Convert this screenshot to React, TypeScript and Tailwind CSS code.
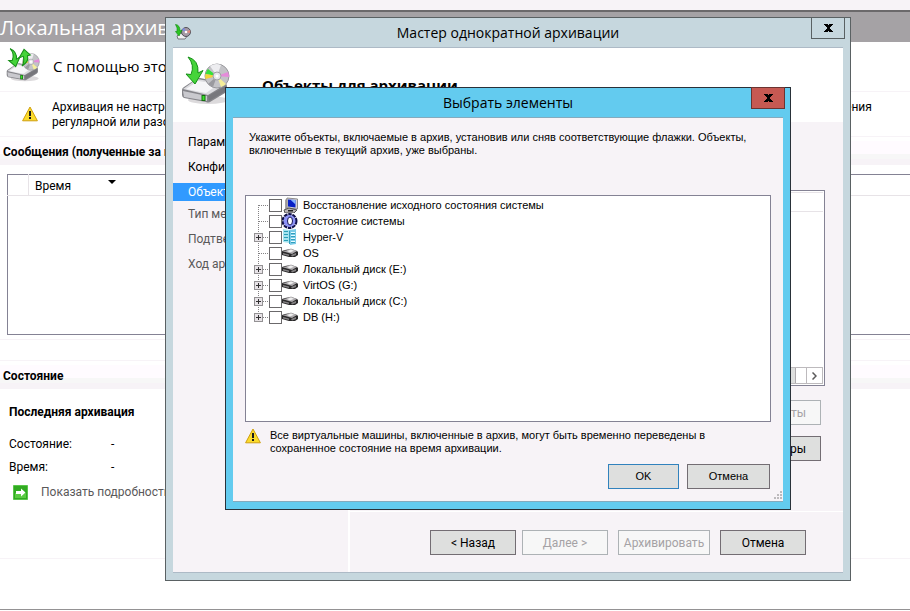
import React from "react";

type ButtonKind = "normal" | "default" | "disabled";

const buttonStyles: Record<ButtonKind, string> = {
  normal: "border-[#736d73] bg-[#dedfde] text-black",
  default: "border-[#3182bd] bg-[#dedfde] text-black",
  disabled: "border-[#adb2b5] bg-[#f7f7f7] text-[#a5a2a5]",
};

function Button({ kind = "normal", className = "", children }: { kind?: ButtonKind; className?: string; children: React.ReactNode }) {
  return (
    <button disabled={kind === "disabled"} className={`h-[25px] whitespace-nowrap border ${buttonStyles[kind]} ${className}`}>
      {children}
    </button>
  );
}

function Drive() {
  return (
    <g>
      <ellipse cx="27" cy="44" rx="20" ry="4" fill="#dcdadc" />
      <path d="M1 34Q1 32 3 31L15 23Q17 22 19 22L44 27Q46 28 46 30V34Q46 36 44 37L29 46Q27 47 25 46L3 42Q1 41 1 39Z" fill="#85858a" />
      <path d="M2 33 16 23 45 28 27 39Z" fill="#dcdce0" />
      <path d="M5 33 17 25 38 28 25 37Z" fill="#f6f6f8" />
      <path d="M2 35 26 40V45L3 41Z" fill="#c9c9ce" />
      <path d="M27 40 45 30V35L28 45Z" fill="#77777c" />
      <path d="M20.500 39h4v6h-4z" fill="#14700f" />
      <path d="M21.500 40h2v4h-2z" fill="#3be42c" />
    </g>
  );
}

function Disc() {
  return (
    <g>
      <circle cx="36" cy="20" r="12" fill="#c3c3c7" stroke="#98989c" />
      <path d="M36 20 29 10 A12 12 0 0 1 40 9Z" fill="#ededf0" />
      <path d="M36 20 24.500 18 A12 12 0 0 1 27 13Z" fill="#35e03c" />
      <path d="M36 20 24.500 23 A12 12 0 0 1 24.500 18Z" fill="#f0d43a" />
      <path d="M36 20 47 16 A12 12 0 0 1 48 21Z" fill="#e58bda" />
      <path d="M36 20 45 28 A12 12 0 0 1 40 31Z" fill="#f5ef9a" />
      <path d="M36 20 32 31 A12 12 0 0 1 27 28Z" fill="#9a9a9f" />
      <circle cx="36" cy="20" r="4" fill="#e6e6e8" stroke="#a0a0a4" />
      <circle cx="36" cy="20" r="1.500" fill="#fff" />
    </g>
  );
}

function WizardIcon({ className }: { className: string }) {
  return (
    <svg viewBox="0 0 49 49" className={className} aria-hidden="true">
      <Drive />
      <Disc />
      <path d="M7 1Q18 4 17 17L22 14.500 14 28 5 18 10 18.500Q14 9 7 1Z" fill="#45d43a" stroke="#178f18" />
    </svg>
  );
}

function WizardSmallIcon({ className }: { className: string }) {
  return (
    <svg viewBox="0 0 16 16" className={className} aria-hidden="true">
      <path d="M2 12 5 9 13 11 10 15 3 15Z" fill="#f0f0f2" stroke="#77777c" />
      <circle cx="11" cy="8" r="4.500" fill="#a59aa5" stroke="#52525a" />
      <path d="M11 8 7 6 A4.500 4.500 0 0 1 9 4Z" fill="#7b8ae7" />
      <path d="M11 8 15 6 A4.500 4.500 0 0 1 15 9Z" fill="#e7867b" />
      <circle cx="11" cy="8" r="1.300" fill="#fff" />
      <path d="M.5.500Q5 1 5 7L7 6 4 12 .5 7.500 2 7.500Q3 4 .5.500Z" fill="#2bc522" stroke="#178f18" strokeWidth=".7" />
    </svg>
  );
}

function BackupIcon({ className }: { className: string }) {
  return (
    <svg viewBox="0 0 49 49" className={className} aria-hidden="true">
      <Drive />
      <Disc />
      <path d="M6 1Q16 5 15 16L20 13 14 27 4 18 9 18Q13 9 6 1Z" fill="#45d43a" stroke="#178f18" strokeWidth="1.500" />
      <path d="M23 26Q27 20 25 12L19 14 26 2 35 10 31 11Q33 20 23 26Z" fill="#45d43a" stroke="#178f18" strokeWidth="1.500" />
    </svg>
  );
}

function WarningIcon() {
  return (
    <svg viewBox="0 0 16 16" className="h-4 w-4 shrink-0" aria-hidden="true">
      <path d="M8 1 15.400 14.800H.6Z" fill="#fbdb2b" stroke="#cf9f10" strokeLinejoin="round" />
      <path d="M7 5h2v5H7zM7 11h2v2H7z" fill="#1b1b1b" />
    </svg>
  );
}

function ComputerIcon() {
  return (
    <svg viewBox="0 0 16 16" className="h-4 w-4" aria-hidden="true">
      <path d="M3 3 5 1V12H3Z" fill="#a5a2a5" />
      <path d="M5 1 15.500 2V12L5 11Z" fill="#d6d3d6" stroke="#8c8a8c" />
      <path d="M6 2.500 13.500 3V10.500L6 9.500Z" fill="#0820c6" />
      <path d="M8.500 2.700 13.500 3V7.500Z" fill="#84b2ff" />
      <path d="M2 13 7 11 15 13 12 16H3Z" fill="#b5b2b5" stroke="#525152" />
      <path d="M6 13h5v1.500H6z" fill="#212021" />
    </svg>
  );
}

function GearIcon() {
  return (
    <svg viewBox="0 0 16 16" className="h-4 w-4" aria-hidden="true">
      <circle cx="7.500" cy="8" r="6.500" fill="none" stroke="#10104a" strokeWidth="3" strokeDasharray="3.400 .684" />
      <circle cx="7.500" cy="8" r="6" fill="#8c92f7" />
      <ellipse cx="8" cy="8" rx="2.500" ry="4" fill="#fff" stroke="#18185a" />
    </svg>
  );
}

function ServerIcon() {
  return (
    <svg viewBox="0 0 16 16" className="h-4 w-4" aria-hidden="true">
      <path d="M1 0 7 1V14L1 13Z" fill="#a5e3ef" />
      <path d="M7 1 14 0V15L8 16Z" fill="#7bcbe7" />
      <path d="M2 2.500h4M2 5.500h4M2 8.500h4M2 11.500h4" stroke="#299eb5" />
      <path d="M9 3.500h4M9 6.500h4M9 9.500h4M9 12.500h4" stroke="#e7fbff" />
      <path d="M9 4.500h4M9 7.500h4M9 10.500h4M9 13.500h4M7.500 2V15" stroke="#319ebd" />
    </svg>
  );
}

function DiskIcon() {
  return (
    <svg viewBox="0 0 16 16" className="h-4 w-4" aria-hidden="true">
      <path d="M0 6 3 5 9 4 15 6 16 7V10L13 12H7L0 10Z" fill="#292829" />
      <path d="M0 6 4 5.500 9 3.500 15 6 10 9Z" fill="#adaaad" />
      <path d="M5 6 9 4.500 12 5.800 8 7.500Z" fill="#efefef" />
      <path d="M1 8 7 9.500V11L1 9.500Z" fill="#848284" />
      <path d="M9 10 14 8V10L10 11.500Z" fill="#848284" />
    </svg>
  );
}

const treeItems = [
  { label: "Восстановление исходного состояния системы", icon: ComputerIcon, expandable: false },
  { label: "Состояние системы", icon: GearIcon, expandable: false },
  { label: "Hyper-V", icon: ServerIcon, expandable: true },
  { label: "OS", icon: DiskIcon, expandable: false },
  { label: "Локальный диск (E:)", icon: DiskIcon, expandable: true },
  { label: "VirtOS (G:)", icon: DiskIcon, expandable: true },
  { label: "Локальный диск (C:)", icon: DiskIcon, expandable: true },
  { label: "DB (H:)", icon: DiskIcon, expandable: true },
];

function Branch({ first, last, expandable }: { first: boolean; last: boolean; expandable: boolean }) {
  return (
    <svg viewBox="0 0 15 16" className="h-4 w-[15px]" aria-hidden="true">
      <path d={`M4.500 ${first ? 8 : 0}V${last ? 8 : 16}M5 8.500H15`} stroke="#848284" strokeDasharray="1 1" fill="none" shapeRendering="crispEdges" />
      {expandable && (
        <g shapeRendering="crispEdges">
          <rect x=".5" y="4.500" width="8" height="8" fill="#e7e3e7" stroke="#949294" />
          <path d="M2 8.500H7M4.500 6V11" stroke="#313031" />
        </g>
      )}
    </svg>
  );
}

function SectionHeader({ children }: { children: React.ReactNode }) {
  return (
    <h2 className="bg-[linear-gradient(#fffbff_55%,#f7f7f7_55%,#f7f7f7_75%,#f7f3f7_75%)] pb-[2px] pl-[3px] text-[12px] font-bold leading-[22px]">{children}</h2>
  );
}

function Console() {
  return (
    <main className="flex min-h-screen flex-col overflow-hidden whitespace-nowrap pt-[10px] text-[12px]">
      <h1 className="h-8 border-t-2 border-[#6b696b] bg-[#a5a2a5] font-['Open_Sans',sans-serif] text-[20px] leading-8 text-white">Локальная архивация</h1>
      <div className="flex h-[50px] items-center gap-[13px] border-b border-[#f7f3f7] pb-1 pl-[6px]">
        <BackupIcon className="h-[34px] w-[34px]" />
        <p className="pt-1 font-['Open_Sans',sans-serif] text-[15px]">С помощью этого приложения можно выполнить архивацию</p>
      </div>
      <div className="flex h-[45px] items-center gap-[14px] border-b border-[#f7f3f7] pl-[22px]">
        <WarningIcon />
        <p className="pt-[2px] leading-[15px]">
          Архивация не настроена для этого компьютера. Запускайте мастер расписания архивации или мастер однократной архивации для выполнения
          <br />
          регулярной или разовой архивации.
        </p>
      </div>
      <div className="pt-1">
        <SectionHeader>Сообщения (полученные за последнюю неделю)</SectionHeader>
      </div>
      <div className="border-b border-[#f7f3f7] pb-1 pl-[7px] pt-[9px]">
        <table className="h-[161px] w-full border border-r-0 border-[#848294]">
          <thead>
            <tr className="h-5 border-b border-[#e7e3e7]">
              <th className="w-[21px] border-r border-[#e7e3e7]"></th>
              <th className="text-left font-normal">
                <span className="flex items-center gap-[37px] pl-[6px] pt-[2px]">
                  Время
                  <svg viewBox="0 0 8 4" className="mb-2 h-1 w-2" aria-hidden="true">
                    <path d="M0 0H8L4 4Z" />
                  </svg>
                </span>
              </th>
            </tr>
          </thead>
          <tbody>
            <tr>
              <td></td>
              <td></td>
            </tr>
          </tbody>
        </table>
      </div>
      <div className="mt-5 border-t border-[#f7f3f7] pt-1">
        <SectionHeader>Состояние</SectionHeader>
      </div>
      <section className="h-[170px] border-b border-[#f7f3f7] pl-[9px] pt-[13px]">
        <h3 className="text-[12px] font-bold leading-5">Последняя архивация</h3>
        <dl className="grid grid-cols-[102px_1fr] pt-[11px] leading-[23px]">
          <dt>Состояние:</dt>
          <dd>-</dd>
          <dt>Время:</dt>
          <dd>-</dd>
        </dl>
        <a href="#details" className="flex items-center gap-[13px] pl-1 pt-1 leading-[18px] text-[#5a595a]">
          <svg viewBox="0 0 15 15" className="h-[15px] w-[15px]" aria-hidden="true">
            <path d="M.5.500h14v14H.5z" fill="#31aa21" stroke="#5ac74a" />
            <path d="M2 8h11v5H2z" fill="#5acb42" />
            <path d="M3 6h5V3.500l4.500 4L8 11.500V9H3z" fill="#fff" />
          </svg>
          Показать подробности
        </a>
      </section>
      <div className="mt-[50px] border-t border-[#949294]"></div>
    </main>
  );
}

function CloseButton({ className }: { className: string }) {
  return (
    <button aria-label="Закрыть" className={`flex h-[22px] w-[34px] items-center justify-center border ${className}`}>
      <svg viewBox="0 0 9 8" className="h-2 w-[9px]" aria-hidden="true">
        <path d="M0 0H4V1H5V0H9V1H8V2H7V3H6V5H7V6H8V7H9V8H5V7H4V8H0V7H1V6H2V5H3V3H2V2H1V1H0Z" />
      </svg>
    </button>
  );
}

function Wizard() {
  return (
    <section className="absolute left-[165px] top-[17px] flex h-[564px] w-[686px] flex-col border border-[#5a6163] bg-[#c6d7de] px-[7px] pb-[7px] text-[12px]">
      <header className="relative flex h-[29px] items-center justify-center font-['Open_Sans',sans-serif] text-[14px]">
        <WizardSmallIcon className="absolute left-[2px] top-[6px] h-4 w-4" />
        <h2>Мастер однократной архивации</h2>
        <CloseButton className="absolute -right-[2px] -top-px border-[#5a6163]" />
      </header>
      <div className="flex flex-1 flex-col border-b border-t border-[#adbac6] bg-[#f7f3f7]">
        <div className="flex h-[74px] gap-8 bg-white pl-2 pt-2">
          <WizardIcon className="h-[49px] w-[49px]" />
          <h3 className="pt-[18px] font-['Open_Sans',sans-serif] text-[15px] font-bold">Объекты для архивации</h3>
        </div>
        <div className="flex flex-1">
          <nav className="w-[177px] border-r-2 border-white pt-[11px] leading-[18px]">
            <ul className="flex flex-col gap-[7px] pb-1">
              <li className="pl-[15px]">Параметры архивации</li>
              <li className="pl-[15px]">Конфигурация</li>
              <li className="bg-[#319aff] pl-[15px] text-white">Объекты для архивации</li>
            </ul>
            <ul className="flex flex-col gap-[7px] text-[#5a595a]">
              <li className="pl-[15px]">Тип места назначения</li>
              <li className="pl-[15px]">Подтверждение</li>
              <li className="pl-[15px]">Ход архивации</li>
            </ul>
          </nav>
          <div className="flex flex-1 flex-col">
            <div className="flex flex-1 flex-col items-end border-b border-white pr-[22px] pt-[68px]">
              <div className="mr-[-4px] flex h-[196px] w-[460px] flex-col justify-between border border-[#848294] bg-white p-px">
                <div className="h-5 border-b border-t border-[#e7e3e7]"></div>
                <div className="flex h-[17px] justify-end border border-[#bdbabd]">
                  <div className="mr-[10px] flex-1 border-r border-[#adaaad] bg-[#dedfde]"></div>
                  <button aria-label="Вправо" className="flex w-4 items-center justify-center border-l border-[#bdbabd]">
                    <svg viewBox="0 0 5 8" className="h-2 w-[5px]" fill="none" stroke="#5a595a" strokeWidth="1.500" aria-hidden="true">
                      <path d="M.5.500 4 4 .5 7.500" />
                    </svg>
                  </button>
                </div>
              </div>
              <Button kind="disabled" className="mt-[14px] px-[14px]">Удалить элементы</Button>
              <Button className="mt-[11px] px-[14px]">Дополнительные параметры</Button>
            </div>
            <div className="flex h-[60px] justify-end pr-[37px] pt-[18px]">
              <Button className="mr-[6px] w-[86px]">&lt; Назад</Button>
              <Button kind="disabled" className="mr-[10px] w-[86px]">Далее &gt;</Button>
              <Button kind="disabled" className="mr-[10px] w-[92px]">Архивировать</Button>
              <Button className="w-[86px]">Отмена</Button>
            </div>
          </div>
        </div>
      </div>
    </section>
  );
}

function SelectDialog() {
  return (
    <section
      role="dialog"
      aria-labelledby="select-title"
      className="absolute left-[225px] top-[87px] flex h-[423px] w-[566px] flex-col border border-[#293139] bg-[#63cbef] px-[7px] pb-[7px] font-['Liberation_Sans',sans-serif] text-[11px] leading-[13px]"
    >
      <header className="relative flex h-[29px] items-center justify-center font-['Open_Sans',sans-serif] text-[14px]">
        <h2 id="select-title">Выбрать элементы</h2>
        <CloseButton className="absolute -right-[2px] -top-px border-[#6b3431] bg-[#c65952]" />
      </header>
      <div className="relative flex flex-1 flex-col border-b border-t border-[#84aabd] bg-[#f7f3f7] px-3 pb-3 pt-[13px]">
        <p className="whitespace-nowrap pl-1">
          Укажите объекты, включаемые в архив, установив или сняв соответствующие флажки. Объекты,
          <br />
          включенные в текущий архив, уже выбраны.
        </p>
        <ul className="mt-[38px] h-[227px] border border-[#848294] bg-white pl-2 pt-px">
          {treeItems.map(({ label, icon: Icon, expandable }, i) => (
            <li key={label} className="flex h-4 items-center">
              {expandable ? (
                <button aria-label={`Развернуть ${label}`}>
                  <Branch first={false} last={i === treeItems.length - 1} expandable />
                </button>
              ) : (
                <Branch first={i === 0} last={false} expandable={false} />
              )}
              <label className="flex items-center">
                <input type="checkbox" className="h-[13px] w-[13px] appearance-none border border-[#6b696b] bg-white checked:bg-[#3182bd]" />
                <Icon />
                <span className="pl-[5px]">{label}</span>
              </label>
            </li>
          ))}
        </ul>
        <div className="mt-[6px] flex gap-[9px]">
          <WarningIcon />
          <p className="pt-px">
            Все виртуальные машины, включенные в архив, могут быть временно переведены в
            <br />
            сохраненное состояние на время архивации.
          </p>
        </div>
        <div className="mt-auto flex justify-end gap-2 pr-px">
          <Button kind="default" className="w-[71px]">OK</Button>
          <Button className="w-[83px]">Отмена</Button>
        </div>
        <svg viewBox="0 0 9 9" className="absolute bottom-px right-px h-[9px] w-[9px]" fill="#bdbabd" aria-hidden="true">
          <path d="M7 0h2v2H7zM7 3h2v2H7zM7 6h2v2H7zM4 3h2v2H4zM4 6h2v2H4zM1 6h2v2H1z" />
        </svg>
      </div>
    </section>
  );
}

export default function App() {
  return (
    <div className="relative min-h-screen overflow-hidden bg-[linear-gradient(#f7f3f7_10px,#fff_10px)] font-[Roboto,sans-serif] text-black">
      <Console />
      <Wizard />
      <SelectDialog />
    </div>
  );
}
